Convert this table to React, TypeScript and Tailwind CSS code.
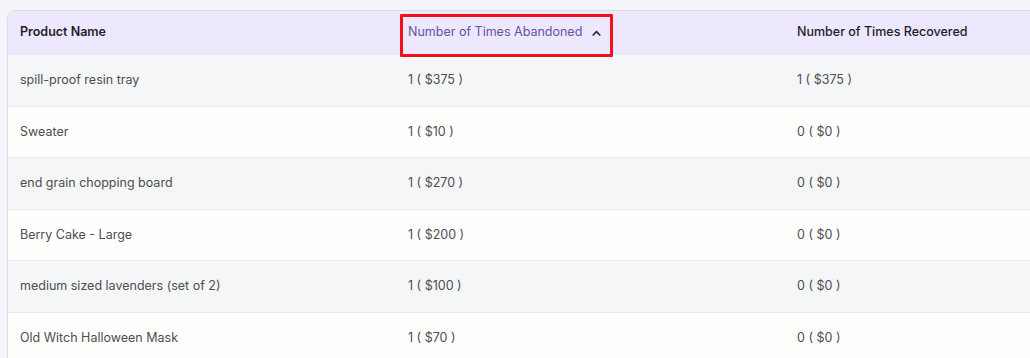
const rows = [
  { name: "spill-proof resin tray", abandoned: "1 ( $375 )", recovered: "1 ( $375 )" },
  { name: "Sweater", abandoned: "1 ( $10 )", recovered: "0 ( $0 )" },
  { name: "end grain chopping board", abandoned: "1 ( $270 )", recovered: "0 ( $0 )" },
  { name: "Berry Cake - Large", abandoned: "1 ( $200 )", recovered: "0 ( $0 )" },
  { name: "medium sized lavenders (set of 2)", abandoned: "1 ( $100 )", recovered: "0 ( $0 )" },
  { name: "Old Witch Halloween Mask", abandoned: "1 ( $70 )", recovered: "0 ( $0 )" },
];

export default function App() {
  return (
    <div
      className="h-[358px] w-[1030px] overflow-hidden bg-[#f4f4f9] pl-[7px] pt-[10px]"
      style={{ fontFamily: "Inter, 'Noto Sans', sans-serif" }}
    >
      <div className="w-[1180px] rounded-tl-[8px] border border-[#dcdce4] bg-white">
        {/* Header */}
        <div className="grid h-[43px] grid-cols-[388px_389px_1fr] items-center rounded-tl-[8px] bg-[#ede8fd] text-[12.5px]">
          <div className="pl-[12px] font-semibold text-[#1d1d2b]">Product Name</div>
          <div className="relative flex h-full items-center pl-[12px] text-[#5f55a6]">
            Number of Times Abandoned
            <svg className="ml-[10px] mt-[1px]" width="9" height="6" viewBox="0 0 9 6" fill="none">
              <path d="M1.2 5L4.5 1.6L7.8 5" stroke="#2a2a3a" strokeWidth="1.7" strokeLinecap="round" strokeLinejoin="round" />
            </svg>
            <div className="pointer-events-none absolute left-[4px] top-[3px] h-[43px] w-[213px] rounded-[1px] border-[3px] border-[#f0111b]" />
          </div>
          <div className="pl-[12px] font-medium text-[#1d1d2b]">Number of Times Recovered</div>
        </div>

        {/* Rows */}
        {rows.map((r, i) => (
          <div
            key={i}
            className={`grid h-[51.6px] grid-cols-[388px_389px_1fr] items-center border-t border-[#e8eaec] text-[12.5px] text-[#4d4d52] ${
              i % 2 === 0 ? "bg-[#f5f6f7]" : "bg-[#fefefd]"
            }`}
          >
            <div className="pl-[12px]">{r.name}</div>
            <div className="pl-[12px]">{r.abandoned}</div>
            <div className="pl-[12px]">{r.recovered}</div>
          </div>
        ))}
      </div>
    </div>
  );
}
